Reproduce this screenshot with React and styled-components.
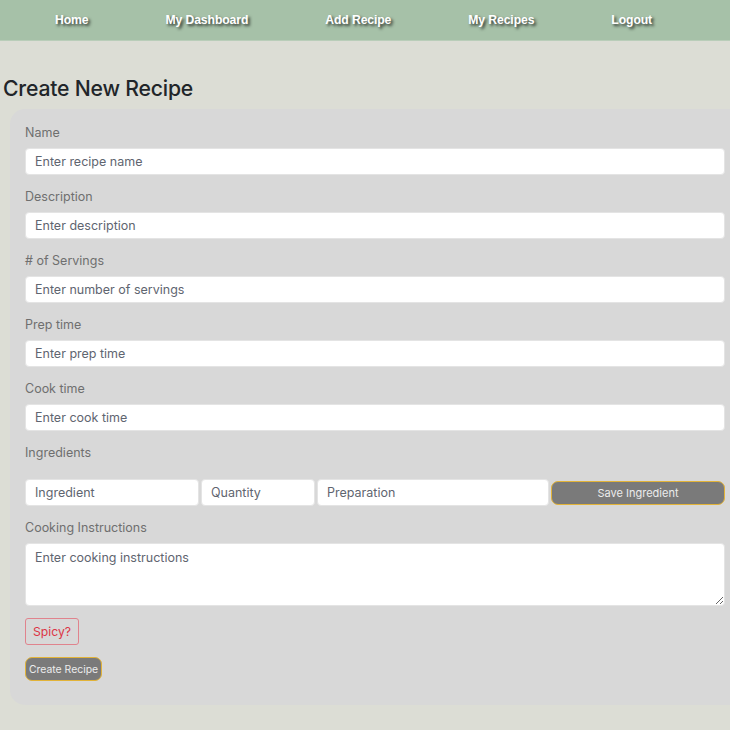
import React from "react";
import styled, { createGlobalStyle } from "styled-components";

const Global = createGlobalStyle`
  html, body { margin: 0; padding: 0; }
  body {
    background: #dcddd5;
    font-family: Inter, "Liberation Sans", sans-serif;
    overflow-x: hidden;
    color: #212529;
  }
  * { box-sizing: border-box; }
`;

const Nav = styled.nav`
  height: 41px;
  background: #a6c1a8;
  border-bottom: 1px solid #b9cdb9;
  display: flex;
  align-items: center;
  padding-left: 55px;
  gap: 77px;
`;

const NavLink = styled.a`
  font-family: "Liberation Sans", Arial, sans-serif;
  font-weight: 700;
  font-size: 12.2px;
  color: #ffffff;
  text-decoration: none;
  text-shadow: 2px 2px 3px rgba(0, 0, 0, 0.75);
  letter-spacing: -0.1px;
`;

const Title = styled.h1`
  margin: 34px 0 8px 3px;
  font-size: 21.2px;
  line-height: 26px;
  font-weight: 500;
  color: #212529;
  letter-spacing: -0.2px;
`;

const Card = styled.form`
  margin-left: 10px;
  margin-right: -30px;
  background: #d8d8d8;
  border-radius: 15px;
  padding: 14px 35px 24px 15px;
  display: flex;
  flex-direction: column;
`;

const Field = styled.div`
  margin-bottom: ${(p) => p.$mb ?? 12}px;
`;

const Label = styled.label`
  display: block;
  font-size: 12.5px;
  line-height: 20px;
  color: #6f6f6f;
  margin-bottom: ${(p) => p.$mb ?? 5}px;
`;

const Input = styled.input`
  display: block;
  width: 100%;
  height: 27px;
  border: 1px solid #e4e4e4;
  border-radius: 4px;
  background: #ffffff;
  padding: 0 9px;
  font-family: Inter, "Liberation Sans", sans-serif;
  font-size: 12.5px;
  color: #212529;
  outline: none;
  &::placeholder { color: #5f6570; }
`;

const TextArea = styled.textarea`
  display: block;
  width: 100%;
  height: 63px;
  border: 1px solid #e4e4e4;
  border-radius: 4px;
  background: #ffffff;
  padding: 6px 9px;
  font-family: Inter, "Liberation Sans", sans-serif;
  font-size: 12.5px;
  line-height: 16px;
  resize: vertical;
  outline: none;
  &::placeholder { color: #5f6570; }
`;

const IngredientRow = styled.div`
  display: grid;
  grid-template-columns: 174px 114px 232px 1fr;
  gap: 2px;
  align-items: center;
  margin-bottom: 12px;
`;

const GreyButton = styled.button`
  height: 24px;
  background: #7a7a7a;
  border: 1px solid #e2b338;
  border-radius: 7px;
  color: #ececec;
  font-family: Inter, "Liberation Sans", sans-serif;
  font-size: ${(p) => p.$fs || 11}px;
  padding: 0 ${(p) => p.$px ?? 5}px;
  cursor: pointer;
`;

const SpicyButton = styled.button`
  align-self: flex-start;
  height: 27px;
  padding: 0 7px;
  background: transparent;
  border: 1px solid #e0838d;
  border-radius: 3px;
  color: #dc3545;
  font-family: Inter, "Liberation Sans", sans-serif;
  font-size: 12.2px;
  margin-bottom: 12px;
`;

const CreateRow = styled.div`
  display: flex;
`;

export default function App() {
  const links = ["Home", "My Dashboard", "Add Recipe", "My Recipes", "Logout"];
  return (
    <>
      <Global />
      <Nav>
        {links.map((l) => (
          <NavLink key={l} href="#">{l}</NavLink>
        ))}
      </Nav>
      <Title>Create New Recipe</Title>
      <Card onSubmit={(e) => e.preventDefault()}>
        <Field>
          <Label>Name</Label>
          <Input placeholder="Enter recipe name" />
        </Field>
        <Field>
          <Label>Description</Label>
          <Input placeholder="Enter description" />
        </Field>
        <Field>
          <Label># of Servings</Label>
          <Input placeholder="Enter number of servings" />
        </Field>
        <Field>
          <Label>Prep time</Label>
          <Input placeholder="Enter prep time" />
        </Field>
        <Field>
          <Label>Cook time</Label>
          <Input placeholder="Enter cook time" />
        </Field>
        <Field $mb={0}>
          <Label $mb={16}>Ingredients</Label>
        </Field>
        <IngredientRow>
          <Input placeholder="Ingredient" />
          <Input placeholder="Quantity" />
          <Input placeholder="Preparation" />
          <GreyButton type="button">Save Ingredient</GreyButton>
        </IngredientRow>
        <Field $mb={12}>
          <Label>Cooking Instructions</Label>
          <TextArea placeholder="Enter cooking instructions" />
        </Field>
        <SpicyButton type="button">Spicy?</SpicyButton>
        <CreateRow>
          <GreyButton type="submit" $fs={10.4} $px={3}>Create Recipe</GreyButton>
        </CreateRow>
      </Card>
    </>
  );
}
